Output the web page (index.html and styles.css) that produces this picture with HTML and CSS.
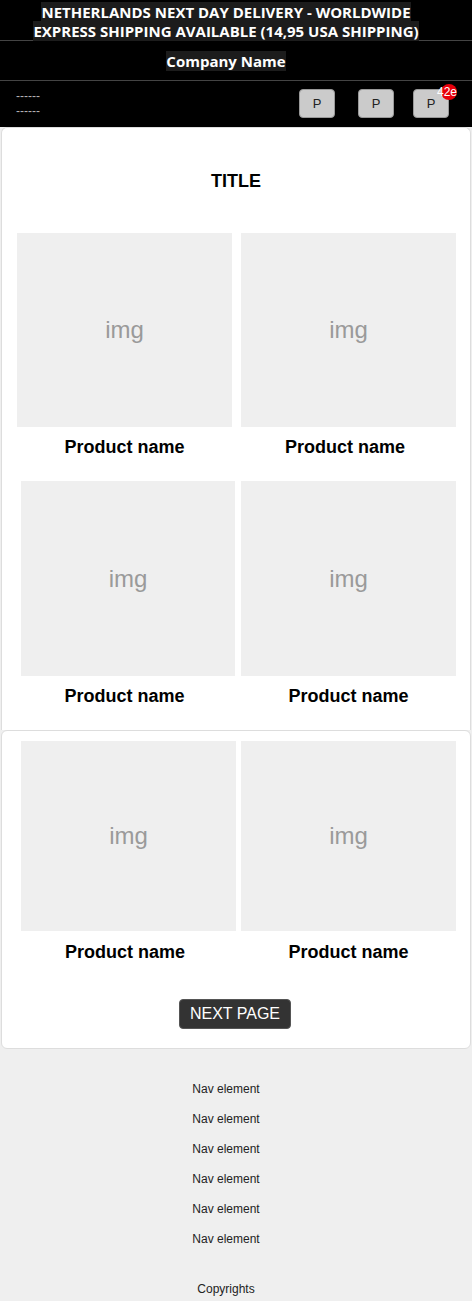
FILE: index.html
```html
<!DOCTYPE html>
<html lang="en">
<head>
<meta charset="utf-8">
<title>Shop</title>
<link rel="stylesheet" href="styles.css">
</head>
<body>
<header class="site-header">
  <div class="promo"><span class="promo-text">NETHERLANDS NEXT DAY DELIVERY - WORLDWIDE<br>EXPRESS SHIPPING AVAILABLE (14,95 USA SHIPPING)</span></div>
  <div class="brand"><span class="brand-text">Company Name</span></div>
  <div class="toolbar">
    <div class="menu-toggle"><span>------</span><span>------</span></div>
    <div class="actions">
      <button class="action-btn">P</button>
      <button class="action-btn">P</button>
      <button class="action-btn action-cart">P<span class="badge">42e</span></button>
    </div>
  </div>
</header>

<main class="content">
  <section class="card card-top">
    <h1 class="page-title">TITLE</h1>
    <div class="product-row row-a">
      <div class="product"><div class="product-img">img</div><div class="product-name">Product name</div></div>
      <div class="product"><div class="product-img">img</div><div class="product-name name-shift">Product name</div></div>
    </div>
    <div class="product-row row-b">
      <div class="product"><div class="product-img">img</div><div class="product-name name-back">Product name</div></div>
      <div class="product"><div class="product-img">img</div><div class="product-name">Product name</div></div>
    </div>
  </section>
  <section class="card card-bottom">
    <div class="product-row row-c">
      <div class="product"><div class="product-img">img</div><div class="product-name name-back">Product name</div></div>
      <div class="product"><div class="product-img">img</div><div class="product-name">Product name</div></div>
    </div>
    <div class="pager"><button class="next-btn">NEXT PAGE</button></div>
  </section>
</main>

<footer class="site-footer">
  <nav class="footer-nav">
    <a class="nav-item">Nav element</a>
    <a class="nav-item">Nav element</a>
    <a class="nav-item">Nav element</a>
    <a class="nav-item">Nav element</a>
    <a class="nav-item">Nav element</a>
    <a class="nav-item">Nav element</a>
  </nav>
  <div class="copyright">Copyrights</div>
</footer>
</body>
</html>
```

FILE: styles.css
```css
* { box-sizing: border-box; }
html, body { margin: 0; padding: 0; }
body {
  background: #efefef;
  font-family: "Liberation Sans", Arial, sans-serif;
  color: #000;
}

/* Header */
.site-header { background: #000; }
.promo {
  text-align: center;
  padding: 3px 20px 1px 0;
  border-bottom: 1px solid #444;
  height: 41px;
}
.promo-text, .brand-text {
  font-family: "Open Sans", "Liberation Sans", sans-serif;
  font-weight: 700;
  font-size: 15px;
  line-height: 18px;
  color: #fff;
  background: #1c1c1c;
}
.brand {
  height: 40px;
  border-bottom: 1px solid #444;
  display: flex;
  align-items: center;
  justify-content: center;
  padding-right: 20px;
}
.brand-text { padding: 1px 0; line-height: 18px; }
.toolbar {
  height: 46px;
  display: flex;
  align-items: center;
  justify-content: space-between;
  padding: 0 23px 0 16px;
}
.menu-toggle {
  display: flex;
  flex-direction: column;
  font-size: 12px;
  line-height: 15px;
  color: #b4b4b4;
  margin-top: -1px;
}
.actions { display: flex; align-items: center; margin-top: -1px; }
.action-btn {
  width: 36px;
  height: 29px;
  background: #cbcbcb;
  border: 1px solid #999;
  border-radius: 4px;
  font-family: "Liberation Sans", Arial, sans-serif;
  font-size: 13px;
  color: #222;
  padding: 0;
  margin-left: 23px;
}
.action-btn:first-child { margin-left: 0; }
.action-cart { position: relative; margin-left: 19px; }
.badge {
  position: absolute;
  top: -6px;
  right: -9px;
  width: 16px;
  height: 16px;
  border-radius: 50%;
  background: #e8000b;
  color: #fff;
  font-size: 12px;
  line-height: 16px;
  display: flex;
  justify-content: flex-end;
  white-space: nowrap;
}

/* Cards */
.content { padding: 0 1px; }
.card {
  background: #fff;
  border: 1px solid #ddd;
}
.card-top {
  border-bottom: none;
  border-radius: 6px 6px 0 0;
  padding: 43px 0 23px;
}
.card-bottom {
  border-radius: 6px;
  padding: 10px 0 19px;
}
.page-title {
  margin: 0 0 41px;
  text-align: center;
  font-size: 18px;
  line-height: 21px;
  font-weight: 700;
}
.product-row { display: flex; }
.row-a { padding-left: 15px; gap: 9px; margin-bottom: 24px; }
.row-a .product { width: 215px; }
.row-a .product-img { height: 194px; }
.row-b { padding-left: 19px; gap: 6px; }
.row-b .product:first-child { width: 214px; }
.row-b .product:last-child { width: 215px; }
.row-b .product-img { height: 195px; }
.row-c { padding-left: 19px; gap: 5px; }
.row-c .product { width: 215px; }
.row-c .product-img { height: 190px; }
.product-img {
  background: #efefef;
  color: #9a9a9a;
  font-size: 24px;
  display: flex;
  align-items: center;
  justify-content: center;
}
.product-name {
  margin-top: 10px;
  text-align: center;
  font-size: 18px;
  line-height: 21px;
  font-weight: 700;
}
.row-a .product-name { margin-top: 10px; margin-bottom: -1px; }
.row-b .product-name { margin-top: 10px; }
.row-c .product-name { margin-top: 11px; margin-bottom: -2px; }
.name-shift { padding-right: 7px; }
.name-back { padding-right: 7px; }
.pager { display: flex; justify-content: center; margin-top: 38px; }
.next-btn {
  height: 30px;
  padding: 0 10px;
  background: #333;
  color: #fff;
  border: 1px solid #555;
  border-radius: 4px;
  font-family: "Liberation Sans", Arial, sans-serif;
  font-size: 16px;
  margin-right: 2px;
}

/* Footer */
.site-footer {
  padding: 25px 20px 0 0;
  text-align: center;
  color: #222;
  font-size: 12px;
}
.footer-nav { display: flex; flex-direction: column; align-items: center; }
.nav-item { line-height: 30px; }
.copyright { margin-top: 20px; line-height: 30px; }
```
